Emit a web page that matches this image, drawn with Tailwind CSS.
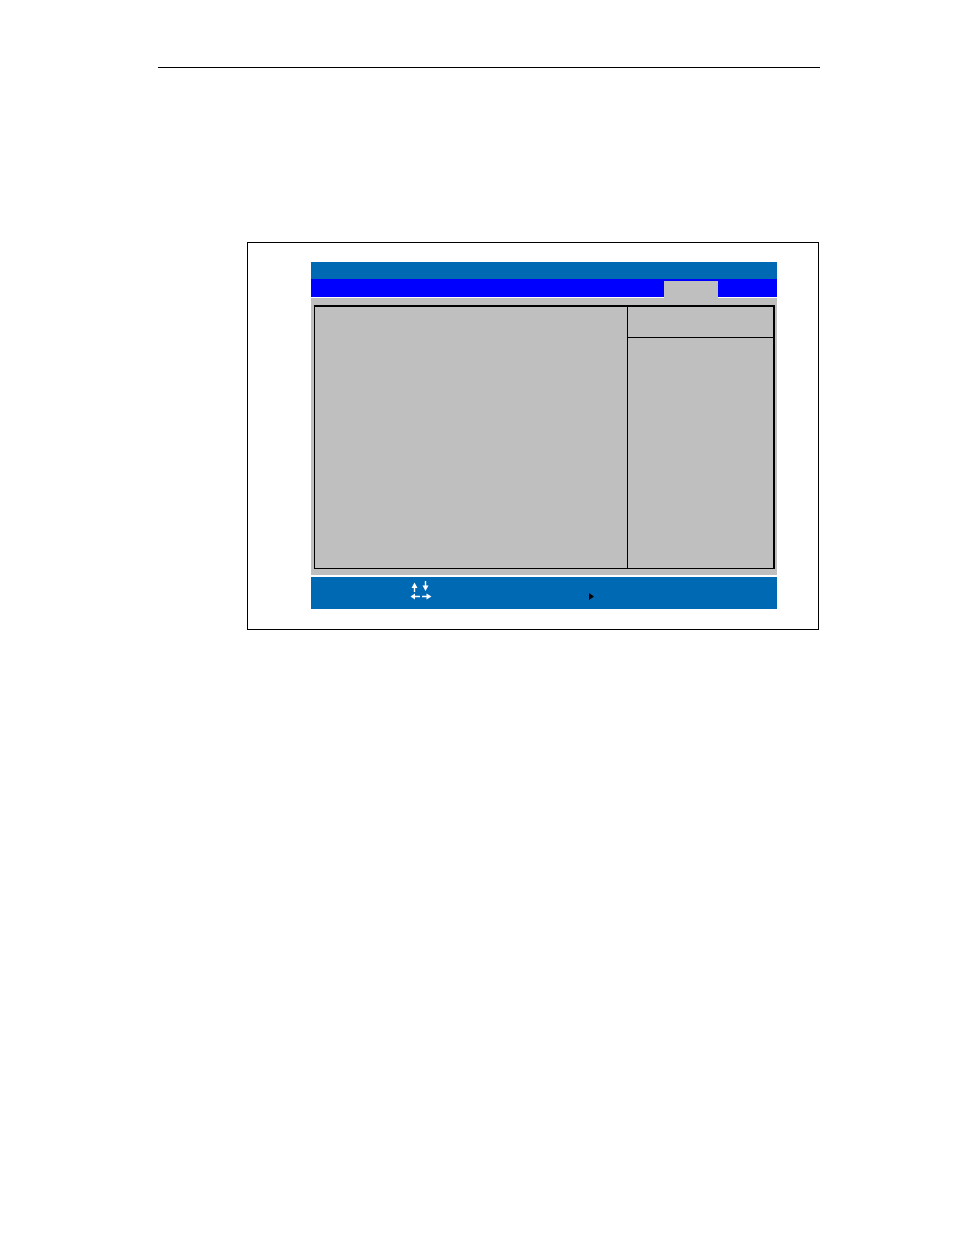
<!DOCTYPE html>
<html lang="en">
<head>
  <meta charset="UTF-8" />
  <meta name="viewport" content="width=device-width, initial-scale=1" />
  <title>Setup Utility</title>
  <script src="https://cdn.jsdelivr.net/npm/@tailwindcss/browser@4"></script>
</head>
<body class="bg-white min-h-screen font-['Liberation_Sans',sans-serif]">

  <div class="pl-[158px] pr-[134px] pt-[67px]">
    <!-- Page rule -->
    <hr class="border-t border-black" />

    <!-- Figure frame -->
    <main class="mt-[174px] ml-[89px] mr-px border border-black pt-[19px] pb-5 pl-[63px] pr-[41px]">

      <!-- Title bar -->
      <header class="h-[17px] bg-[#0069b4]"></header>

      <!-- Menu bar, selected tab on the right -->
      <nav aria-label="Setup menu" class="flex items-end justify-end h-[19px] pr-[59px] bg-linear-to-b from-[#0000ff] from-[18px] to-white to-[18px]">
        <div class="w-[54px] h-[17px] bg-[#bfbfbf]"></div>
      </nav>

      <!-- Work area -->
      <div class="bg-[#bfbfbf] pt-[7px] pb-[6px] pl-[3px] pr-[2px]">
        <div class="flex min-h-[264px] border border-t-2 border-r-2 border-black">
          <section class="flex-1"></section>
          <aside class="w-[146px] border-l border-black">
            <div class="h-[31px] border-b border-black"></div>
          </aside>
        </div>
      </div>

      <!-- Key help -->
      <footer class="flex mt-[2px] h-8 pl-[97px] bg-[#0069b4]">
        <svg viewBox="0 0 26 24" class="w-[26px] h-6 mt-px" role="img" aria-label="Arrow keys">
          <g fill="#fff">
            <path d="M6.500 4.500L9.500 10H7.200V14H5.800V10H3.500Z" />
            <path d="M16.800 3H18.200V7.500H20.500L17.500 13L14.500 7.500H16.800Z" />
            <path d="M2.500 18.500L7 15.500V17.800H12V19.200H7V21.500Z" />
            <path d="M14 17.800H18.500V15.500L23.500 18.500L18.500 21.500V19.200H14Z" />
          </g>
        </svg>
        <svg viewBox="0 0 14 14" class="size-[14px] ml-[150px] mt-[11px]" role="img" aria-label="Submenu">
          <path d="M5 5L10 8.500L5 12Z" fill="#000" />
        </svg>
      </footer>
    </main>
  </div>

</body>
</html>
